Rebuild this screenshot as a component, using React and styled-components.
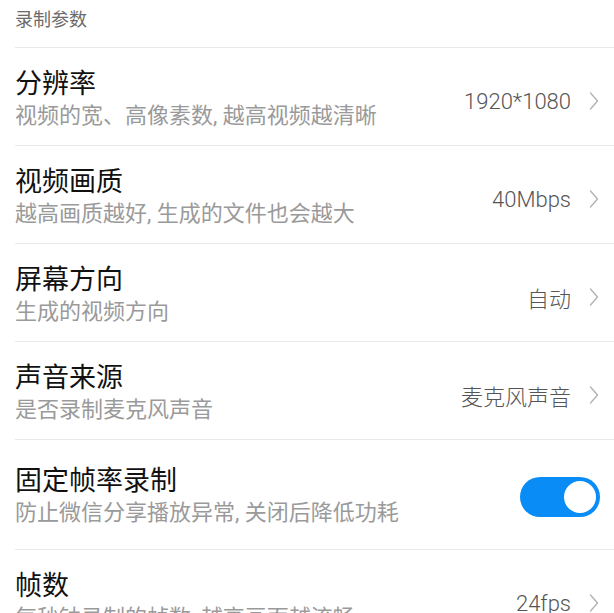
import styled, { createGlobalStyle } from "styled-components";

const GlobalStyle = createGlobalStyle`
  html, body {
    margin: 0;
    padding: 0;
    background: #ffffff;
  }
  body {
    font-family: "Roboto", "Noto Sans CJK SC", sans-serif;
  }
`;

const settings = [
  { title: "分辨率", desc: "视频的宽、高像素数, 越高视频越清晰", value: "1920*1080" },
  { title: "视频画质", desc: "越高画质越好, 生成的文件也会越大", value: "40Mbps" },
  { title: "屏幕方向", desc: "生成的视频方向", value: "自动" },
  { title: "声音来源", desc: "是否录制麦克风声音", value: "麦克风声音" },
  { title: "固定帧率录制", desc: "防止微信分享播放异常, 关闭后降低功耗", toggle: true, on: true },
  { title: "帧数", desc: "每秒钟录制的帧数, 越高画面越流畅", value: "24fps" },
];

const Chevron = () => (
  <svg width="10" height="20" viewBox="0 0 10 20" fill="none">
    <path d="M1.5 2 L8.5 10 L1.5 18" stroke="#b0b0b0" strokeWidth="1.3" strokeLinecap="round" strokeLinejoin="round" />
  </svg>
);

const App = () => {
  return (
    <Page>
      <GlobalStyle />
      <Section>
        <SectionTitle>录制参数</SectionTitle>
        {settings.map((item) => (
          <Row key={item.title} $tall={item.toggle}>
            <Texts>
              <Title>{item.title}</Title>
              <Desc>{item.desc}</Desc>
            </Texts>
            {item.toggle ? (
              <Switch $on={item.on}>
                <Knob $on={item.on} />
              </Switch>
            ) : (
              <Value>
                <span>{item.value}</span>
                <Chevron />
              </Value>
            )}
          </Row>
        ))}
      </Section>
    </Page>
  );
};

export default App;

const Page = styled.div`
  width: 614px;
  height: 613px;
  overflow: hidden;
  background: #fff;
`;

const Section = styled.div`
  padding-left: 15px;
`;

const SectionTitle = styled.div`
  padding: 6px 0 13px;
  line-height: 28px;
  font-size: 18px;
  color: #6b6b6b;
  border-bottom: 1px solid #e9e9e9;
`;

const Row = styled.div`
  display: flex;
  align-items: center;
  justify-content: space-between;
  padding: ${(p) => (p.$tall ? "25px 14px 20px 0" : "20px 15px 13px 0")};
  border-bottom: 1px solid #e9e9e9;
`;

const Texts = styled.div`
  display: flex;
  flex-direction: column;
`;

const Title = styled.div`
  font-size: 27px;
  line-height: 32px;
  color: #111;
`;

const Desc = styled.div`
  font-size: 22px;
  line-height: 32px;
  color: #9a9a9a;
  white-space: nowrap;
`;

const Value = styled.div`
  display: flex;
  align-items: center;
  gap: 18px;
  font-size: 22px;
  font-weight: 300;
  color: #555;
  margin-top: 2px;
`;

const Switch = styled.div`
  width: 80px;
  height: 40px;
  border-radius: 20px;
  box-sizing: border-box;
  padding: 4px;
  background: ${(p) => (p.$on ? "#0a8cf7" : "#ddd")};
  display: flex;
  justify-content: ${(p) => (p.$on ? "flex-end" : "flex-start")};
`;

const Knob = styled.div`
  width: 32px;
  height: 32px;
  border-radius: 50%;
  background: #fff;
`;
